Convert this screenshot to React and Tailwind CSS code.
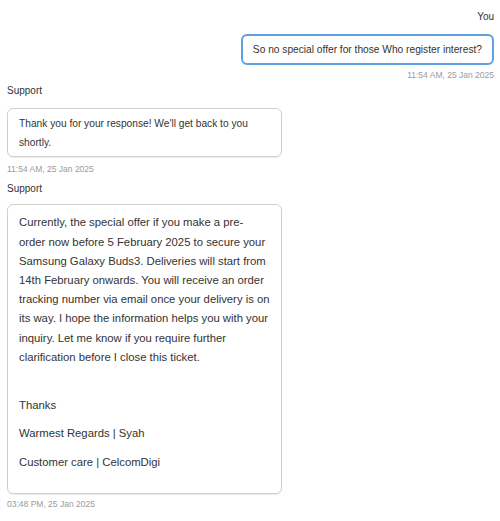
import React from 'react';

const font = { fontFamily: '"Liberation Sans", Arial, sans-serif' };

const messages = [
  {
    id: 1,
    from: 'You',
    mine: true,
    body: ['So no special offer for those Who register interest?'],
    time: '11:54 AM, 25 Jan 2025',
  },
  {
    id: 2,
    from: 'Support',
    body: ["Thank you for your response! We'll get back to you shortly."],
    time: '11:54 AM, 25 Jan 2025',
  },
];

const App = () => {
  return (
    <div
      className="w-[500px] h-[521px] bg-white overflow-hidden text-[#333] pl-[7px] pr-[6px] pt-[11px]"
      style={font}
    >
      {/* My message */}
      <div className="flex flex-col items-end">
        <div className="text-[10px] leading-[12px]">{messages[0].from}</div>
        <div className="mt-[10.5px] border-2 border-[#5f9fe4] rounded-[6px] px-[10px] py-[4px] text-[10.2px] leading-[19.2px] max-w-[275px]">
          {messages[0].body[0]}
        </div>
        <div className="mt-[5.5px] text-[8.5px] leading-[10px] text-[#9a9a9a]">{messages[0].time}</div>
      </div>

      {/* Support reply */}
      <div className="mt-[4.7px] flex flex-col items-start">
        <div className="text-[10px] leading-[12px]">{messages[1].from}</div>
        <div className="mt-[10.8px] w-[275px] border border-[#cfcfcf] rounded-[6px] shadow-[0_1px_1px_rgba(0,0,0,0.08)] px-[11px] pt-[5px] pb-[4px] text-[10.2px] leading-[19.2px]">
          {messages[1].body[0]}
        </div>
        <div className="mt-[6.5px] text-[8.5px] leading-[10px] text-[#9a9a9a]">{messages[1].time}</div>
      </div>

      {/* Support long reply */}
      <div className="mt-[9.3px] flex flex-col items-start">
        <div className="text-[10px] leading-[12px]">Support</div>
        <div className="mt-[9.5px] w-[275px] border border-[#cfcfcf] rounded-[6px] shadow-[0_1px_1px_rgba(0,0,0,0.08)] px-[11px] pt-[8px] pb-[21.5px] text-[11.3px] leading-[19.2px]">
          <p>
            Currently, the special offer if you make a pre-
            <br />
            order now before 5 February 2025 to secure your
            Samsung Galaxy Buds3. Deliveries will start from 14th February onwards. You will receive an order
            tracking number via email once your delivery is on its way. I hope the information helps you with
            your inquiry. Let me know if you require further clarification before I close this ticket.
            <br />
            <br />
          </p>
          <p className="mt-[9.5px]">Thanks</p>
          <p className="mt-[9.3px]">Warmest Regards | Syah</p>
          <p className="mt-[9.3px]">Customer care | CelcomDigi</p>
        </div>
        <div className="mt-[4.6px] text-[8.5px] leading-[10px] text-[#9a9a9a]">03:48 PM, 25 Jan 2025</div>
      </div>
    </div>
  );
};

export default App;
